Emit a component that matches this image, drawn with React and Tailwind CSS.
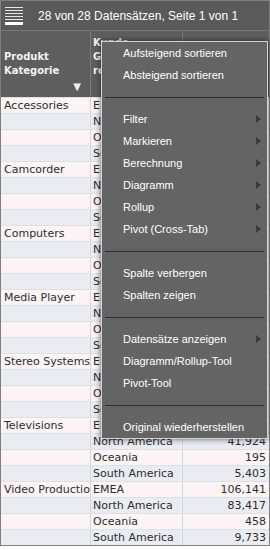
import React from "react";

const categories = [
  { name: "Accessories", values: ["129,410", "98,217", "1,642", "12,308"] },
  { name: "Camcorder", values: ["214,902", "187,365", "2,914", "21,556"] },
  { name: "Computers", values: ["176,288", "143,051", "1,987", "16,470"] },
  { name: "Media Player", values: ["88,734", "70,129", "903", "7,812"] },
  { name: "Stereo Systems", values: ["301,447", "256,903", "3,210", "29,875"] },
  { name: "Televisions", values: ["52,318", "41,924", "195", "5,403"] },
  { name: "Video Production", values: ["106,141", "83,417", "458", "9,733"] },
];

const regions = ["EMEA", "North America", "Oceania", "South America"];

const menu = [
  { label: "Aufsteigend sortieren" },
  { label: "Absteigend sortieren" },
  { sep: true },
  { label: "Filter", sub: true },
  { label: "Markieren", sub: true },
  { label: "Berechnung", sub: true },
  { label: "Diagramm", sub: true },
  { label: "Rollup", sub: true },
  { label: "Pivot (Cross-Tab)", sub: true },
  { sep: true },
  { label: "Spalte verbergen" },
  { label: "Spalten zeigen" },
  { sep: true },
  { label: "Datensätze anzeigen", sub: true },
  { label: "Diagramm/Rollup-Tool" },
  { label: "Pivot-Tool" },
  { sep: true },
  { label: "Original wiederherstellen" },
];

function Hamburger() {
  return (
    <svg width="19" height="20" viewBox="0 0 19 20" className="shrink-0">
      <rect x="0" y="1" width="18" height="1" fill="#e6e6e6" />
      <rect x="0" y="4" width="18" height="1" fill="#e6e6e6" />
      <rect x="0" y="7" width="18" height="1" fill="#e6e6e6" />
      <rect x="0" y="10" width="18" height="1" fill="#e6e6e6" />
      <rect x="0" y="13" width="18" height="1" fill="#e6e6e6" />
      <rect x="0" y="16" width="18" height="3" fill="#ffffff" />
    </svg>
  );
}

function App() {
  const rows = [];
  categories.forEach((cat) => {
    regions.forEach((region, i) => {
      rows.push({ cat: i === 0 ? cat.name : "", region, value: cat.values[i] });
    });
  });

  return (
    <div className="w-[270px] h-[550px] bg-white relative overflow-hidden">
      <div className="border border-[#7f7f7f]">
        <div className="h-[30px] bg-[#5a5a5a] flex items-center pl-[4px] gap-[14px] border-b border-[#787878] font-['Liberation_Sans',Arial,sans-serif] text-[12px] text-white">
          <Hamburger />
          <span>28 von 28 Datensätzen, Seite 1 von 1</span>
        </div>

        <div className="h-[66px] bg-[#5e5e5e] grid grid-cols-[90px_92px_1fr] font-['DejaVu_Sans',Tahoma,sans-serif] font-bold text-[10px] leading-[14px] text-[#f2f2f2]">
          <div className="border-r border-[#7a7a7a] flex flex-col justify-end px-[3px] pb-[2px]">
            <span>Produkt</span>
            <span>Kategorie</span>
            <span className="self-end text-[10px] leading-[17px] pr-[6px]">▼</span>
          </div>
          <div className="border-r border-[#7a7a7a] flex flex-col justify-start px-[2px] pt-[5px]">
            <span>Kunde</span>
            <span>Geo</span>
            <span>region</span>
          </div>
          <div className="flex flex-col justify-end items-end px-[3px] pb-[19px]">
            <span>Umsatz</span>
          </div>
        </div>

        <div className="font-['DejaVu_Sans',Tahoma,sans-serif] text-[11px] text-[#2c2c2c]">
          {rows.map((r, idx) => (
            <div
              key={idx}
              className={
                "h-[16px] grid grid-cols-[90px_92px_1fr] border-t border-[#dbe0e6] leading-[15px] " +
                (idx % 2 === 0 ? "bg-[#fdf5f5]" : "bg-[#e9edf2]")
              }
            >
              <div className="border-r border-[#d3d7dc] pl-[3px] whitespace-nowrap overflow-hidden">{r.cat}</div>
              <div className="border-r border-[#d3d7dc] pl-[2px] whitespace-nowrap overflow-hidden">{r.region}</div>
              <div className="text-right pr-[3px]">{r.value}</div>
            </div>
          ))}
        </div>
      </div>

      <div className="absolute left-[101px] top-[41px] w-[167px] bg-[#646464] border border-[#d4d4d4] shadow-[0_0_6px_rgba(0,0,0,0.6)] font-['Liberation_Sans',Arial,sans-serif] text-[11px] text-white">
        {menu.map((m, i) =>
          m.sep ? (
            <div key={i} className="h-[22px] flex items-center px-[3px]">
              <div className="h-px w-full bg-[#2e2e2e]" />
            </div>
          ) : (
            <div key={i} className="h-[22px] flex items-center justify-between pl-[21px] pr-[6px]">
              <span>{m.label}</span>
              {m.sub && (
                <svg width="5" height="8" viewBox="0 0 5 8">
                  <path d="M0 0 L5 4 L0 8 Z" fill="#3a3a3a" />
                </svg>
              )}
            </div>
          )
        )}
      </div>
    </div>
  );
}

export default App;
